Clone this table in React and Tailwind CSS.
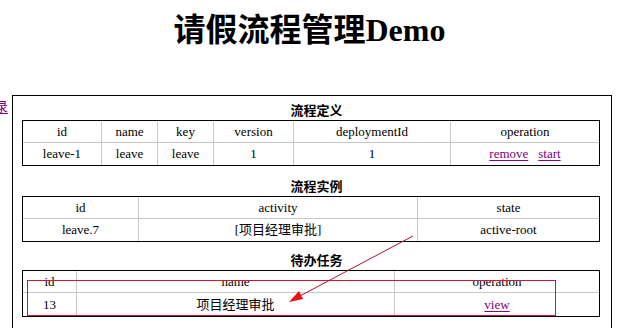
const serif = "font-['Liberation_Serif','Noto_Sans_CJK_SC',serif]";

const definitions = [
  { id: 'leave-1', name: 'leave', key: 'leave', version: '1', deploymentId: '1' },
];
const instances = [{ id: 'leave.7', activity: '[项目经理审批]', state: 'active-root' }];
const tasks = [{ id: '13', name: '项目经理审批' }];

function Cell({ children, last, bottom, className = '' }) {
  return (
    <td
      className={`text-center align-middle p-0 border-[#c8c8c8] ${last ? '' : 'border-r'} ${bottom ? '' : 'border-b'} ${className}`}
    >
      {children}
    </td>
  );
}

function Link({ children }) {
  return <a href="#" className="text-[#800080] underline underline-offset-2">{children}</a>;
}

function Section({ title, className = '', children }) {
  return (
    <div className={className}>
      <div className="text-center font-bold text-[13px] leading-[19px]">{title}</div>
      <table className="w-[578px] table-fixed border-separate border-spacing-0 border border-black text-[13px] leading-[16px]">
        {children}
      </table>
    </div>
  );
}

export default function App() {
  return (
    <div className={`relative w-[619px] h-[328px] overflow-hidden bg-white text-black ${serif}`}>
      <h1 className="text-center text-[32px] font-bold leading-[37px] pt-[12px] mb-[46px]">请假流程管理Demo</h1>

      <div className="flex items-start">
        {/* nav link, mostly scrolled out of view */}
        <div className="w-[12px] overflow-hidden flex justify-end pr-[4px] pt-[4px]">
          <span className="whitespace-nowrap text-[13px] leading-[16px]"><Link>登录</Link></span>
        </div>

        <div className="w-[600px] border border-black pt-[5px] pl-[9px] pb-[40px]">
          <Section title="流程定义">
            <tbody>
              <tr className="h-[22px]">
                <Cell className="w-[79px]">id</Cell>
                <Cell className="w-[56px]">name</Cell>
                <Cell className="w-[56px]">key</Cell>
                <Cell className="w-[80px]">version</Cell>
                <Cell className="w-[157px]">deploymentId</Cell>
                <Cell last>operation</Cell>
              </tr>
              {definitions.map(d => (
                <tr key={d.id} className="h-[22px]">
                  <Cell bottom>{d.id}</Cell>
                  <Cell bottom>{d.name}</Cell>
                  <Cell bottom>{d.key}</Cell>
                  <Cell bottom>{d.version}</Cell>
                  <Cell bottom>{d.deploymentId}</Cell>
                  <Cell bottom last>
                    <Link>remove</Link>
                    <span className="inline-block w-[10px]" />
                    <Link>start</Link>
                  </Cell>
                </tr>
              ))}
            </tbody>
          </Section>

          <Section title="流程实例" className="mt-[11px]">
            <tbody>
              <tr className="h-[22px]">
                <Cell className="w-[116px]">id</Cell>
                <Cell className="w-[279px]">activity</Cell>
                <Cell last>state</Cell>
              </tr>
              {instances.map(i => (
                <tr key={i.id} className="h-[22px]">
                  <Cell bottom>{i.id}</Cell>
                  <Cell bottom>{i.activity}</Cell>
                  <Cell bottom last>{i.state}</Cell>
                </tr>
              ))}
            </tbody>
          </Section>

          <Section title="待办任务" className="mt-[9px]">
            <tbody>
              <tr className="h-[22px]">
                <Cell className="w-[54px]">id</Cell>
                <Cell className="w-[318px]">name</Cell>
                <Cell last>operation</Cell>
              </tr>
              {tasks.map(t => (
                <tr key={t.id} className="h-[23px]">
                  <Cell bottom>{t.id}</Cell>
                  <Cell bottom>{t.name}</Cell>
                  <Cell bottom last><Link>view</Link></Cell>
                </tr>
              ))}
            </tbody>
          </Section>
        </div>
      </div>

      {/* annotation: highlight box + arrow */}
      <div className="absolute left-[27px] top-[280px] w-[529px] h-[36px] border border-[#d4142c]" />
      <svg className="absolute left-0 top-0" width="619" height="328" viewBox="0 0 619 328">
        <line x1="413" y1="236" x2="298" y2="297" stroke="#b4102c" strokeWidth="1" />
        <polygon points="289,302 299,291 303,299" fill="#ee1111" />
      </svg>
    </div>
  );
}
